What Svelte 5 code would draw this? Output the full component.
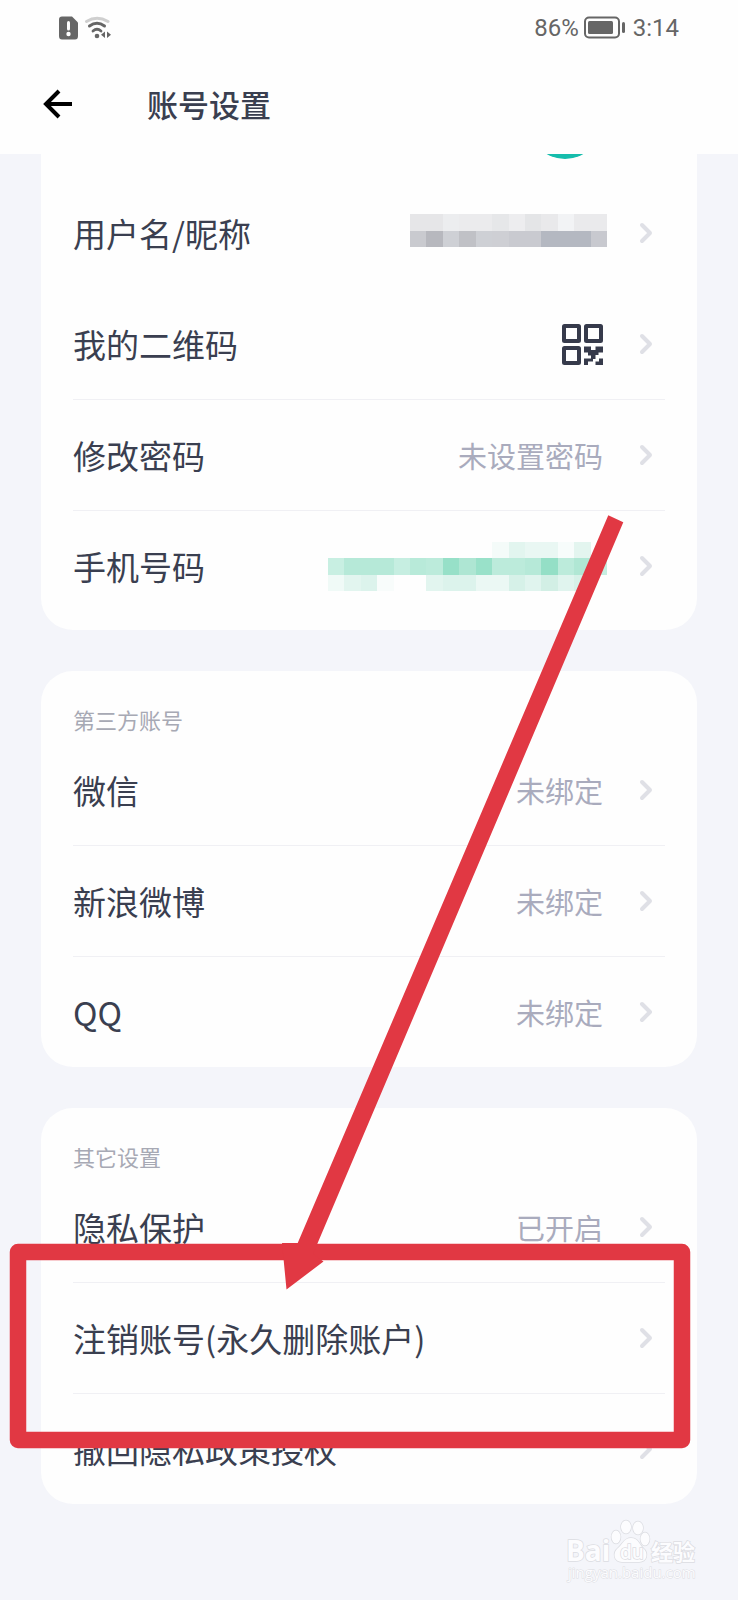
<script>
  const greyMosaic = [
    ['#e6e6e8', '#e6e6e8', '#ecedef', '#ebebed', '#ebebed', '#e6e7e9', '#ededef', '#e4e5e7', '#e9e9eb', '#f2f3f5', '#eaeaec', '#eaeaec'],
    ['#c9cacf', '#b7b8be', '#ced0d5', '#c0c1c6', '#ced0d5', '#cecfd4', '#c9cad0', '#c9cad0', '#b4b8c1', '#b4b8c1', '#b4b8c1', '#c8c9cf'],
  ];
  const greenMosaic = [
    ['', '', '', '', '', '', '', '', '', '', '#f4fbf9', '#e2f5ef', '#e9f7f3', '#e9f7f3', '#f7fcfb', '#e3f5ef', ''],
    ['#c8efe2', '#b6e9d8', '#b6e9d8', '#b6e9d8', '#c6eee1', '#b8ead9', '#bcebdb', '#97e0c8', '#aee6d3', '#99e1c9', '#bcebdb', '#bcebdb', '#b6e9d8', '#94dfc6', '#bcebdb', '#b0e7d4', '#c6eee1'],
    ['#f0faf7', '#e2f5ef', '#dcf3ec', '#f8fcfb', '', '', '#e2f5ef', '#dcf3ec', '#dcf3ec', '#ebf8f4', '#ebf8f4', '#d6f1e8', '#e0f4ee', '#d2efe5', '#e0f4ee', '#d6f1e8', ''],
  ];

  const groups = [
    {
      title: '',
      rows: [
        { label: '用户名/昵称', mosaic: greyMosaic, width: 197, height: 33, plain: true },
        { label: '我的二维码', qr: true },
        { label: '修改密码', value: '未设置密码' },
        { label: '手机号码', mosaic: greenMosaic, width: 279, height: 49 },
      ],
    },
    {
      title: '第三方账号',
      rows: [
        { label: '微信', value: '未绑定' },
        { label: '新浪微博', value: '未绑定' },
        { label: 'QQ', value: '未绑定' },
      ],
    },
    {
      title: '其它设置',
      rows: [
        { label: '隐私保护', value: '已开启' },
        { label: '注销账号(永久删除账户)' },
        { label: '撤回隐私政策授权' },
      ],
    },
  ];
</script>

<div class="screen">
  <header>
    <div class="status">
      <div class="status-side">
        <svg width="20" height="24" viewBox="0 0 20 24">
          <path d="M3 0.500H13L19 6.500V20Q19 23.500 16 23.500H3Q0 23.500 0 20V3.500Q0 0.500 3 0.500Z" fill="#666" />
          <path d="M9.500 6.500V13" stroke="#fff" stroke-width="3" stroke-linecap="round" />
          <circle cx="9.500" cy="18" r="2.200" fill="#fff" />
        </svg>
        <svg width="28" height="24" viewBox="0 0 28 24" fill="none" stroke-linecap="round">
          <path d="M2.500 5.500Q13 -1 24 5.500" stroke="#cfcfcf" stroke-width="3" />
          <path d="M5.500 10Q13 4.500 20.500 10" stroke="#666" stroke-width="3" />
          <path d="M9 15Q13 11.500 17 15" stroke="#666" stroke-width="2.800" />
          <circle cx="13" cy="20" r="2.300" fill="#666" />
          <path d="M21 15.500V22L17 18.700ZM23 15.500V22L27 18.700Z" fill="#666" />
        </svg>
      </div>
      <div class="status-side">
        <span>86%</span>
        <svg width="42" height="24" viewBox="0 0 42 24">
          <rect x="1" y="1.500" width="34" height="20" rx="4" fill="none" stroke="#666" stroke-width="2" />
          <rect x="4" y="5" width="25" height="13" rx="1.500" fill="#666" />
          <rect x="38" y="6" width="3" height="11" rx="1.500" fill="#666" />
        </svg>
        <span class="time">3:14</span>
      </div>
    </div>
    <div class="bar">
      <button class="back" aria-label="返回">
        <svg width="32" height="32" viewBox="0 0 32 32" fill="none" stroke="#000" stroke-width="4">
          <path d="M17 3L4 16L17 29M4 16H30" />
        </svg>
      </button>
      <h1>账号设置</h1>
    </div>
  </header>

  <main>
    {#each groups as group, index}
      <section class:first={index === 0}>
        {#if index === 0}
          <div class="avatar-row"><span class="avatar"></span></div>
        {:else}
          <h2>{group.title}</h2>
        {/if}
        {#each group.rows as row}
          <button class="row" class:plain={row.plain}>
            <span class="label">{row.label}</span>
            {#if row.value}
              <span class="value">{row.value}</span>
            {:else if row.qr}
              <svg class="value" width="41" height="41" viewBox="0 0 41 41">
                <g fill="none" stroke="#363a4b" stroke-width="4">
                  <rect x="2" y="2" width="15" height="15" rx="0.500" />
                  <rect x="24" y="2" width="15" height="15" rx="0.500" />
                  <rect x="2" y="24" width="15" height="15" rx="0.500" />
                </g>
                <path fill="#363a4b" d="M22 22.500H29V26H33.500V22.500H41V28.500H36.500V31H33.500V35H31V37.500H26V41H22V34.500H29V31.500H26V28.500H22ZM37 34.500H41V41H33.500V37.500H37Z" />
              </svg>
            {:else if row.mosaic}
              <svg class="mosaic" width={row.width} height={row.height} viewBox="0 0 {row.mosaic[0].length} {row.mosaic.length}" preserveAspectRatio="none" shape-rendering="crispEdges">
                {#each row.mosaic as line, y}
                  {#each line as color, x}
                    {#if color}
                      <rect {x} {y} width="1" height="1" fill={color} />
                    {/if}
                  {/each}
                {/each}
              </svg>
            {/if}
            <svg class="chevron" width="14" height="22" viewBox="0 0 14 22" fill="none" stroke="#dfe0e6" stroke-width="4" stroke-linecap="round" stroke-linejoin="round">
              <path d="M3 3L11 11L3 19" />
            </svg>
          </button>
        {/each}
      </section>
    {/each}
  </main>

  <svg class="watermark" width="136" height="66" viewBox="0 0 136 66" fill="#fcfcfe" stroke="#dcdde2" stroke-width="1.500" paint-order="stroke">
    <text x="0" y="43" font-size="28" font-weight="700">Bai</text>
    <ellipse cx="50" cy="19" rx="4.500" ry="6.500" />
    <ellipse cx="60" cy="9" rx="5" ry="6.500" />
    <ellipse cx="72" cy="10" rx="5" ry="6.500" />
    <ellipse cx="79" cy="21" rx="4.500" ry="6.500" />
    <path d="M65 20C72 20 73 26 77 30C83 35 81 44 73 44H56C48 44 46 35 52 30C57 26 58 20 65 20Z" />
    <text x="54" y="41" font-size="19" font-weight="600">du</text>
    <text x="85" y="42" font-size="22" font-weight="700">经验</text>
    <text x="2" y="60" font-size="15" stroke-width="1">jingyan.baidu.com</text>
  </svg>

  <svg class="annotation" viewBox="0 0 738 1600">
    <rect x="18" y="1252" width="664" height="188" fill="none" stroke="#e13843" stroke-width="16.500" stroke-linejoin="round" />
    <path fill="#e13843" d="M608.300 515.300L623.300 522.300L313 1254L323.500 1261.500L286.500 1289.500L282 1243L297.700 1243Z" />
  </svg>
</div>

<style>
  :global(body) {
    background: #f4f5fa;
  }

  .screen {
    position: relative;
    min-height: 100vh;
    overflow: hidden;
    background: #f4f5fa;
    color: #3a3f50;
    font-family: 'Noto Sans CJK SC', 'Noto Sans', sans-serif;
  }

  header {
    background: #fefefe;
    height: 154px;
  }

  .status {
    display: flex;
    justify-content: space-between;
    align-items: center;
    height: 56px;
    padding: 0 59px;
    color: #666;
    font: 24px/28px Roboto, sans-serif;
  }

  .status-side {
    display: flex;
    align-items: center;
    gap: 5px;
  }

  .time {
    margin-left: 2px;
  }

  .bar {
    display: flex;
    align-items: center;
    gap: 73px;
    height: 96px;
    padding: 0 42px;
  }

  button {
    border: 0;
    padding: 0;
    background: none;
    color: inherit;
    font: inherit;
  }

  .back {
    display: flex;
  }

  h1 {
    margin: 0;
    font-size: 31px;
    line-height: 44px;
    font-weight: 500;
  }

  main {
    display: flex;
    flex-direction: column;
    gap: 41px;
    padding: 0 41px 95px;
    overflow: hidden;
  }

  section {
    padding: 0 32px;
    border-radius: 32px;
    background: #fefefe;
  }

  .first {
    margin-top: -87px;
    padding-bottom: 9px;
  }

  .avatar-row {
    display: flex;
    align-items: center;
    justify-content: flex-end;
    height: 111px;
    padding-right: 64px;
  }

  .avatar {
    width: 72px;
    height: 72px;
    border-radius: 50%;
    background: #16bdac;
  }

  h2 {
    margin: 0;
    padding: 32px 0 0;
    height: 32px;
    color: #a7a9b4;
    font-size: 22px;
    line-height: 32px;
    font-weight: 400;
  }

  .row {
    display: flex;
    align-items: center;
    width: 100%;
    height: 111px;
    padding-right: 12px;
    border-bottom: 1px solid #f0f0f4;
    text-align: left;
  }

  .row.plain {
    border-color: transparent;
  }

  .row:last-child {
    height: 110px;
    border-bottom: 0;
  }

  .label {
    flex: 1;
    font-size: 33px;
    line-height: 48px;
  }

  .value {
    margin-right: 36px;
    color: #a9abbd;
    font-size: 29px;
    line-height: 40px;
  }

  .mosaic {
    margin-right: 32px;
  }

  .plain .mosaic {
    margin-bottom: 6px;
  }

  .watermark {
    position: absolute;
    right: 36px;
    bottom: 16px;
    overflow: visible;
    font-family: 'Open Sans', 'Noto Sans CJK SC', sans-serif;
  }

  .annotation {
    position: absolute;
    top: 0;
    left: 0;
    width: 100%;
    pointer-events: none;
  }
</style>
